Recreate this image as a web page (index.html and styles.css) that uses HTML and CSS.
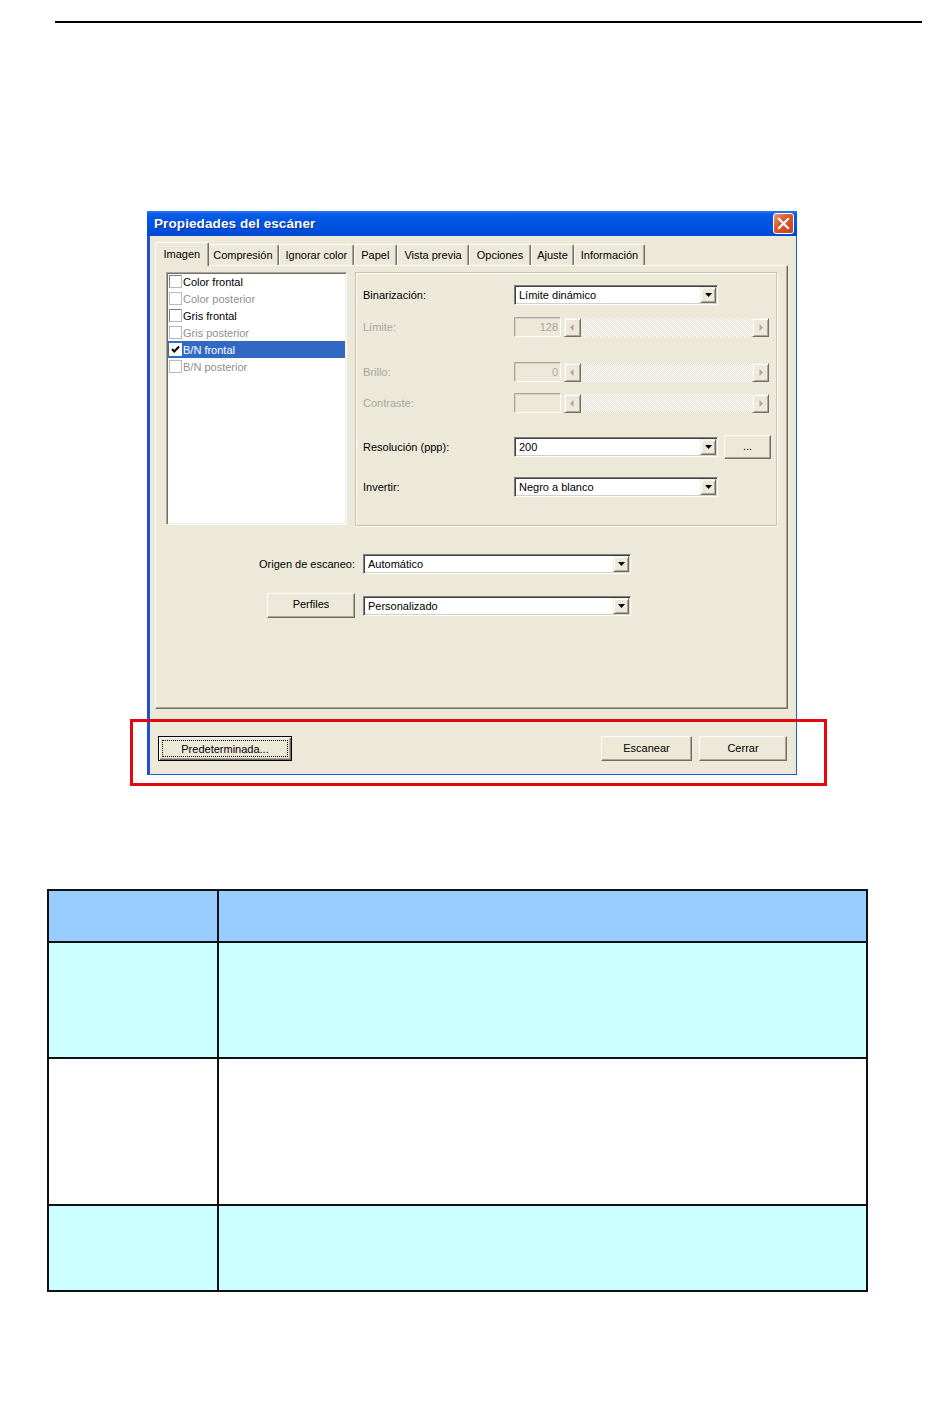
FILE: index.html
```html
<!DOCTYPE html>
<html lang="es">
<head>
<meta charset="utf-8">
<title>Propiedades del escáner</title>
<link rel="stylesheet" href="styles.css">
</head>
<body>
<div class="rule"></div>

<section class="figure">
  <div class="dialog">
    <div class="titlebar">
      <span class="title">Propiedades del escáner</span>
      <span class="close"><svg viewBox="0 0 21 21" width="21" height="21"><path d="M6 6 L15 15 M15 6 L6 15" stroke="#fff" stroke-width="2.2" stroke-linecap="square"/></svg></span>
    </div>
    <div class="winbody">
      <div class="tabs">
        <span class="tab sel">Imagen</span>
        <span class="tab">Compresión</span>
        <span class="tab">Ignorar color</span>
        <span class="tab wide">Papel</span>
        <span class="tab wide">Vista previa</span>
        <span class="tab wide">Opciones</span>
        <span class="tab">Ajuste</span>
        <span class="tab">Información</span>
      </div>
      <div class="tabpage">
        <div class="top">
          <div class="listbox">
            <div class="item"><span class="cb"></span>Color frontal</div>
            <div class="item dis"><span class="cb"></span>Color posterior</div>
            <div class="item"><span class="cb"></span>Gris frontal</div>
            <div class="item dis"><span class="cb"></span>Gris posterior</div>
            <div class="item sel"><span class="cb on"><svg viewBox="0 0 11 11" width="11" height="11"><path d="M2 5 L4.3 7.5 L9 2.5" fill="none" stroke="#000" stroke-width="2"/></svg></span>B/N frontal</div>
            <div class="item dis"><span class="cb"></span>B/N posterior</div>
          </div>
          <div class="group">
            <div class="row r1">
              <span class="lbl">Binarización:</span>
              <div class="combo cw"><span class="val">Límite dinámico</span><span class="drop"><svg viewBox="0 0 7 4" width="7" height="4"><path d="M0 0 H7 L3.5 4Z" fill="#000"/></svg></span></div>
            </div>
            <div class="row r2">
              <span class="lbl dis">Límite:</span>
              <span class="edit">128</span>
              <div class="scroll">
                <span class="sbtn"><svg viewBox="0 0 15 17" width="15" height="17"><path d="M8.5 5 L5 8.5 L8.5 12Z" fill="#ACA899"/></svg></span>
                <span class="track"></span>
                <span class="sbtn"><svg viewBox="0 0 15 17" width="15" height="17"><path d="M6.5 5 L10 8.5 L6.5 12Z" fill="#ACA899"/></svg></span>
              </div>
            </div>
            <div class="row r3">
              <span class="lbl dis">Brillo:</span>
              <span class="edit">0</span>
              <div class="scroll">
                <span class="sbtn"><svg viewBox="0 0 15 17" width="15" height="17"><path d="M8.5 5 L5 8.5 L8.5 12Z" fill="#ACA899"/></svg></span>
                <span class="track"></span>
                <span class="sbtn"><svg viewBox="0 0 15 17" width="15" height="17"><path d="M6.5 5 L10 8.5 L6.5 12Z" fill="#ACA899"/></svg></span>
              </div>
            </div>
            <div class="row r4">
              <span class="lbl dis">Contraste:</span>
              <span class="edit"></span>
              <div class="scroll">
                <span class="sbtn"><svg viewBox="0 0 15 17" width="15" height="17"><path d="M8.5 5 L5 8.5 L8.5 12Z" fill="#ACA899"/></svg></span>
                <span class="track"></span>
                <span class="sbtn"><svg viewBox="0 0 15 17" width="15" height="17"><path d="M6.5 5 L10 8.5 L6.5 12Z" fill="#ACA899"/></svg></span>
              </div>
            </div>
            <div class="row r5">
              <span class="lbl">Resolución (ppp):</span>
              <div class="combo cw"><span class="val">200</span><span class="drop"><svg viewBox="0 0 7 4" width="7" height="4"><path d="M0 0 H7 L3.5 4Z" fill="#000"/></svg></span></div>
              <span class="btn dots">...</span>
            </div>
            <div class="row r6">
              <span class="lbl">Invertir:</span>
              <div class="combo cw"><span class="val">Negro a blanco</span><span class="drop"><svg viewBox="0 0 7 4" width="7" height="4"><path d="M0 0 H7 L3.5 4Z" fill="#000"/></svg></span></div>
            </div>
          </div>
        </div>
        <div class="lower">
          <span class="olbl">Origen de escaneo:</span>
          <div class="combo"><span class="val">Automático</span><span class="drop"><svg viewBox="0 0 7 4" width="7" height="4"><path d="M0 0 H7 L3.5 4Z" fill="#000"/></svg></span></div>
          <span class="btn perf">Perfiles</span>
          <div class="combo"><span class="val">Personalizado</span><span class="drop"><svg viewBox="0 0 7 4" width="7" height="4"><path d="M0 0 H7 L3.5 4Z" fill="#000"/></svg></span></div>
        </div>
      </div>
      <div class="buttons">
        <span class="btn def"><span class="focus">Predeterminada...</span></span>
        <div class="right">
          <span class="btn scan">Escanear</span>
          <span class="btn closebtn">Cerrar</span>
        </div>
      </div>
    </div>
  </div>
  <div class="highlight"></div>
</section>

<table class="spec">
  <tr class="head"><th class="c1"></th><th></th></tr>
  <tr class="ra"><td class="c1"></td><td></td></tr>
  <tr class="rb"><td class="c1"></td><td></td></tr>
  <tr class="rc"><td class="c1"></td><td></td></tr>
</table>
</body>
</html>
```

FILE: styles.css
```css
* { box-sizing: border-box; }

body {
  margin: 0;
  background: #fff;
  font-family: "Liberation Sans", Arial, sans-serif;
  font-size: 11px;
  color: #000;
}

.rule {
  height: 2px;
  background: #000;
  margin: 21px 28px 0 55px;
}

.figure {
  position: relative;
  margin-top: 188px;
  padding-left: 147px;
}

.dialog {
  width: 650px;
  height: 564px;
  display: flex;
  flex-direction: column;
}

.titlebar {
  height: 25px;
  display: flex;
  align-items: center;
  justify-content: space-between;
  padding: 0 3px 1px 7px;
  background: linear-gradient(#2F7BF0 0, #0A5DE8 3px, #0056E6 8px, #0053E2 60%, #0049D4 100%);
}

.title {
  color: #fff;
  font-weight: bold;
  font-size: 13.5px;
  text-shadow: 1px 1px 0 #0B2A8A;
  letter-spacing: 0.1px;
}

.close {
  width: 21px;
  height: 21px;
  border: 1px solid #fff;
  border-radius: 3px;
  background: linear-gradient(135deg, #EB9A7C 0%, #DA5A2F 40%, #C9401A 100%);
  display: flex;
  align-items: center;
  justify-content: center;
}
.close svg { display: block; margin: -1px; }

.winbody {
  flex: 1;
  display: flex;
  flex-direction: column;
  background: #ECE9D8;
  border-left: 3px solid #1C50D8;
  border-right: 1px solid #2458E0;
  border-bottom: 1px solid #2458E0;
  padding: 6px 8px 0 5px;
}

/* tabs */
.tabs {
  height: 23px;
  display: flex;
  align-items: flex-end;
  padding-left: 2px;
}

.tab {
  height: 21px;
  line-height: 20px;
  padding: 0 5.5px;
  border-left: 1px solid #fff;
  border-top: 1px solid #fff;
  border-right: 1px solid #716F64;
  box-shadow: inset -1px 0 0 #ACA899;
  border-radius: 2px 2px 0 0;
  white-space: nowrap;
}
.tab.wide { padding: 0 6.5px; }

.tab.sel {
  position: relative;
  z-index: 1;
  height: 24px;
  margin: 0 -2px -1px -2px;
  padding: 0 7.5px;
  line-height: 22px;
  background: #ECE9D8;
}

.tabpage {
  height: 444px;
  border-top: 1px solid #fff;
  border-left: 1px solid #fff;
  border-right: 1px solid #716F64;
  border-bottom: 1px solid #716F64;
  box-shadow: inset -1px -1px 0 #ACA899;
  padding: 6px 10px 0 10px;
  display: flex;
  flex-direction: column;
}

.top {
  display: flex;
  gap: 8px;
  height: 254px;
}

/* list */
.listbox {
  width: 181px;
  height: 253px;
  background: #fff;
  border-top: 1px solid #ACA899;
  border-left: 1px solid #ACA899;
  border-right: 1px solid #fff;
  border-bottom: 1px solid #fff;
  box-shadow: inset 1px 1px 0 #716F64, inset -1px -1px 0 #F1EFE2;
  padding: 0 1px 0 1px;
}

.item {
  height: 17px;
  display: flex;
  align-items: center;
  white-space: nowrap;
  padding-left: 1px;
}
.item.dis { color: #8F8F8F; }
.item.sel { background: #316AC5; color: #fff; }

.cb {
  width: 13px;
  height: 13px;
  margin-right: 1px;
  background: #fff;
  border: 1px solid #7E7E7E;
  border-right-color: #B8B8B8;
  border-bottom-color: #B8B8B8;
  display: flex;
  align-items: center;
  justify-content: center;
}
.item.dis .cb { border-color: #B9B9B9; }
.cb.on { border-color: #fff; }

/* group panel */
.group {
  width: 422px;
  height: 254px;
  border: 1px solid #C5C2B2;
  box-shadow: inset 1px 1px 0 #fff, 1px 1px 0 #fff;
  padding-left: 7px;
}

.row {
  height: 20px;
  display: flex;
  align-items: center;
}
.r1 { margin-top: 12px; }
.r2 { margin-top: 12px; }
.r3 { margin-top: 25px; }
.r4 { margin-top: 11px; }
.r5 { margin-top: 24px; }
.r6 { margin-top: 20px; }

.lbl {
  width: 151px;
  white-space: nowrap;
}
.lbl.dis { color: #A7A6A0; }

.combo {
  height: 20px;
  display: flex;
  align-items: center;
  background: #fff;
  border-top: 1px solid #808080;
  border-left: 1px solid #808080;
  border-right: 1px solid #fff;
  border-bottom: 1px solid #fff;
  box-shadow: inset 1px 1px 0 #404040, inset -1px -1px 0 #D4D0C8;
  padding: 1px;
}
.combo.cw { width: 204px; }

.val {
  flex: 1;
  padding-left: 3px;
  white-space: nowrap;
}

.drop {
  width: 16px;
  height: 16px;
  background: #ECE9D8;
  border-top: 1px solid #F1EFE2;
  border-left: 1px solid #F1EFE2;
  border-right: 1px solid #716F64;
  border-bottom: 1px solid #716F64;
  box-shadow: inset 1px 1px 0 #fff, inset -1px -1px 0 #ACA899;
  display: flex;
  align-items: center;
  justify-content: center;
}

.edit {
  width: 47px;
  height: 20px;
  margin-right: 3px;
  border-top: 1px solid #ACA899;
  border-left: 1px solid #ACA899;
  border-right: 1px solid #fff;
  border-bottom: 1px solid #fff;
  box-shadow: inset 1px 1px 0 #D4D0C8;
  color: #A7A6A0;
  text-align: right;
  padding-right: 2px;
  line-height: 18px;
}

.scroll {
  width: 205px;
  height: 19px;
  display: flex;
}
.sbtn {
  width: 17px;
  height: 19px;
  background: #ECE9D8;
  border-top: 1px solid #F1EFE2;
  border-left: 1px solid #F1EFE2;
  border-right: 1px solid #716F64;
  border-bottom: 1px solid #716F64;
  box-shadow: inset 1px 1px 0 #fff, inset -1px -1px 0 #ACA899;
  display: flex;
  align-items: center;
  justify-content: center;
}
.track {
  flex: 1;
  background-image: repeating-conic-gradient(#fff 0 25%, #E4E1D2 0 50%);
  background-size: 2px 2px;
}

/* buttons */
.btn {
  display: flex;
  align-items: center;
  justify-content: center;
  height: 25px;
  background: #ECE9D8;
  border-top: 1px solid #fff;
  border-left: 1px solid #fff;
  border-right: 1px solid #716F64;
  border-bottom: 1px solid #716F64;
  box-shadow: inset -1px -1px 0 #ACA899;
  white-space: nowrap;
}
.btn.dots {
  width: 47px;
  height: 24px;
  margin-left: 6px;
  padding-bottom: 2px;
}

.lower {
  margin-top: 28px;
  display: grid;
  grid-template-columns: 189px 268px;
  grid-template-rows: 20px 25px;
  column-gap: 8px;
  row-gap: 19px;
  align-items: center;
}
.olbl {
  justify-self: end;
  white-space: nowrap;
}
.btn.perf {
  width: 88px;
  justify-self: end;
  padding-bottom: 3px;
}

.buttons {
  margin-top: 27px;
  height: 25px;
  display: flex;
  justify-content: space-between;
  padding: 0 1px 0 3px;
}
.buttons .btn { padding-bottom: 2px; }
.right {
  display: flex;
  gap: 7px;
}
.btn.def {
  width: 134px;
  border: 1px solid #000;
  box-shadow: inset 1px 1px 0 #fff, inset -1px -1px 0 #716F64, inset -2px -2px 0 #ACA899;
  padding: 3px;
}
.focus {
  flex: 1;
  height: 100%;
  border: 1px dotted #000;
  display: flex;
  align-items: center;
  justify-content: center;
}
.btn.scan { width: 91px; }
.btn.closebtn { width: 88px; }

.highlight {
  position: absolute;
  left: 130px;
  top: 508px;
  width: 697px;
  height: 67px;
  border: 3px solid #E3080E;
}

/* table */
.spec {
  margin: 114px 0 0 47px;
  width: 821px;
  border-collapse: collapse;
}
.spec th, .spec td {
  border: 2px solid #111;
  padding: 0;
}
.spec .c1 { width: 170px; }
.spec .head { height: 52px; background: #99CCFF; }
.spec .ra { height: 116px; background: #CCFFFF; }
.spec .rb { height: 147px; background: #fff; }
.spec .rc { height: 86px; background: #CCFFFF; }
```
